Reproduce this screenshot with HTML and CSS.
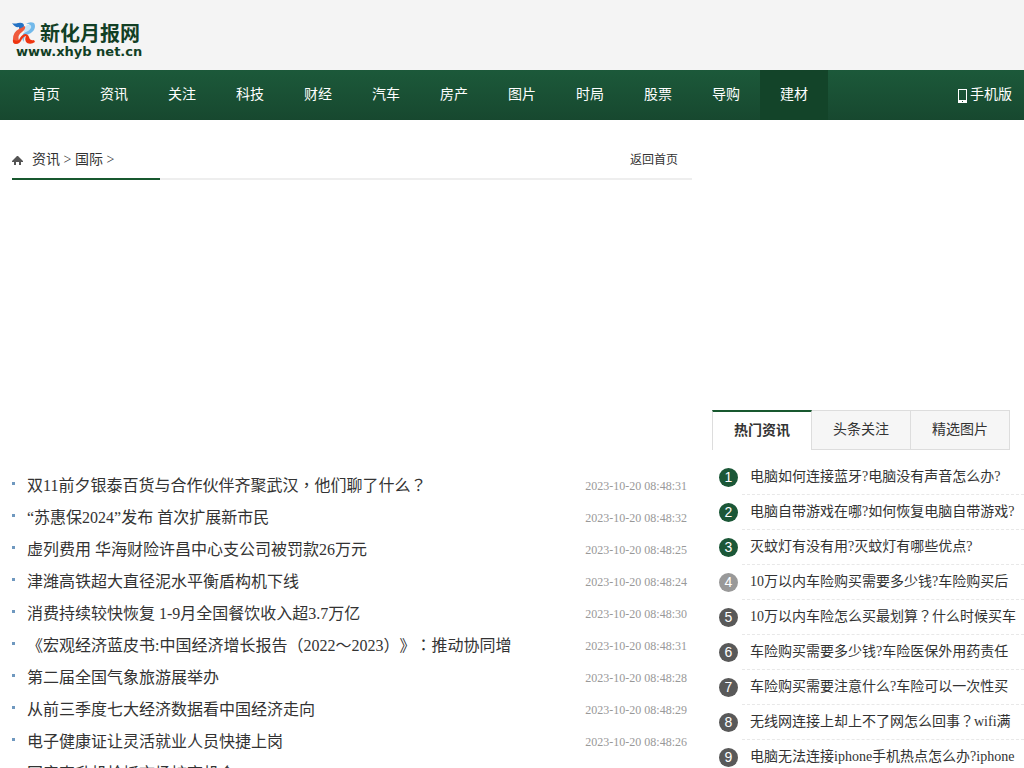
FILE: index.html
```html
<!DOCTYPE html>
<html lang="zh-CN">
<head>
<meta charset="utf-8">
<title>新化月报网</title>
<link rel="stylesheet" href="styles.css">
</head>
<body>
<header class="header">
  <a class="logo" href="#">
    <svg class="logo-mark" viewBox="0 0 24 24" aria-hidden="true">
      <path d="M0 1 Q2 2 6 1 Q12 0 12 4 Q11 8 6 10 Q8 7 7 5 Q3 6 0 1Z" fill="#2472c4"/>
      <path d="M14 2 Q18-1 22 1 Q24 4 22 8 Q19 12 14 13 Q11 16 12 20 Q9 17 11 12 Q13 9 17 8 Q20 5 17 2Z" fill="#72b9ea"/>
      <path d="M15 3 Q20 2 19 6 Q17 9 12 11 Q11 6 15 3Z" fill="#c5e5f8"/>
      <path d="M13 4 Q14 7 10 10 Q5 13 7 19 Q3 21 1 17 Q1 10 7 7 Q11 5 13 4Z" fill="#ef5a3c"/>
      <path d="M1 17 Q0 22 4 22 Q8 22 10 17 Q12 14 14 14 Q12 18 15 21 Q19 23 23 20 L22 18 Q18 19 17 15 Q16 12 13 12 Q9 13 7 18 Q4 20 1 17Z" fill="#ee3510"/>
    </svg>
    <strong class="logo-name">新化月报网</strong>
    <span class="logo-url">www.xhyb net.cn</span>
  </a>
</header>
<nav class="nav">
  <div class="nav-links">
    <a href="#">首页</a><a href="#">资讯</a><a href="#">关注</a><a href="#">科技</a><a href="#">财经</a><a href="#">汽车</a><a href="#">房产</a><a href="#">图片</a><a href="#">时局</a><a href="#">股票</a><a href="#">导购</a><a class="current" href="#">建材</a>
  </div>
  <a class="mobile" href="#">
    <svg class="phone" viewBox="0 0 9 14" aria-hidden="true"><path fill="#fff" fill-rule="evenodd" d="M0 0H9V14H0ZM1 1V11H8V1ZM4 12V13H5V12Z"/></svg>手机版</a>
</nav>
<div class="page">
  <main class="main">
    <div class="crumbs">
      <div class="path">
        <svg class="home" viewBox="0 0 11 9" aria-hidden="true"><path fill="#555" d="M5 0H6L11 5V6H9V9H7V6H4V9H2V6H0V5Z"/></svg>
        <span><a href="#">资讯</a> &gt; <a href="#">国际</a> &gt;</span>
      </div>
      <a class="back" href="#">返回首页</a>
    </div>
    <ul class="news">
      <li><a href="#">双11前夕银泰百货与合作伙伴齐聚武汉<span class="mid" lang="zh-TW">，</span>他们聊了什么<span class="mid" lang="zh-TW">？</span></a><time>2023-10-20 08:48:31</time></li>
      <li><a href="#">“苏惠保2024”发布 首次扩展新市民</a><time>2023-10-20 08:48:32</time></li>
      <li><a href="#">虚列费用 华海财险许昌中心支公司被罚款26万元</a><time>2023-10-20 08:48:25</time></li>
      <li><a href="#">津潍高铁超大直径泥水平衡盾构机下线</a><time>2023-10-20 08:48:24</time></li>
      <li><a href="#">消费持续较快恢复 1-9月全国餐饮收入超3.7万亿</a><time>2023-10-20 08:48:30</time></li>
      <li><a href="#">《宏观经济蓝皮书:中国经济增长报告（2022～2023）》<span class="mid" lang="zh-TW">：</span>推动协同增</a><time>2023-10-20 08:48:31</time></li>
      <li><a href="#">第二届全国气象旅游展举办</a><time>2023-10-20 08:48:28</time></li>
      <li><a href="#">从前三季度七大经济数据看中国经济走向</a><time>2023-10-20 08:48:29</time></li>
      <li><a href="#">电子健康证让灵活就业人员快捷上岗</a><time>2023-10-20 08:48:26</time></li>
      <li><a href="#">国产直升机抢抓市场扩商机会</a></li>
    </ul>
  </main>
  <aside class="side">
    <div class="tabs">
      <button class="tab active" type="button">热门资讯</button>
      <button class="tab" type="button">头条关注</button>
      <button class="tab" type="button">精选图片</button>
    </div>
    <ol class="hot">
      <li><span class="num top">1</span><a href="#">电脑如何连接蓝牙?电脑没有声音怎么办?</a></li>
      <li><span class="num top">2</span><a href="#">电脑自带游戏在哪?如何恢复电脑自带游戏?</a></li>
      <li><span class="num top">3</span><a href="#">灭蚊灯有没有用?灭蚊灯有哪些优点?</a></li>
      <li><span class="num light">4</span><a href="#">10万以内车险购买需要多少钱?车险购买后</a></li>
      <li><span class="num">5</span><a href="#">10万以内车险怎么买最划算<span class="mid" lang="zh-TW">？</span>什么时候买车</a></li>
      <li><span class="num">6</span><a href="#">车险购买需要多少钱?车险医保外用药责任</a></li>
      <li><span class="num">7</span><a href="#">车险购买需要注意什么?车险可以一次性买</a></li>
      <li><span class="num">8</span><a href="#">无线网连接上却上不了网怎么回事<span class="mid" lang="zh-TW">？</span>wifi满</a></li>
      <li><span class="num">9</span><a href="#">电脑无法连接iphone手机热点怎么办?iphone</a></li>
    </ol>
  </aside>
</div>
</body>
</html>
```
FILE: styles.css
```css
* { box-sizing: border-box; }
body {
  margin: 0;
  overflow: hidden;
  background: #fff;
  color: #333;
  font: 14px/20px "Liberation Serif", "Noto Sans CJK SC", serif;
  text-spacing-trim: space-all;
}
a { color: inherit; text-decoration: none; }
ul, ol { margin: 0; padding: 0; list-style: none; }
/* full-width punctuation centred in its cell */
.mid { font-family: "Noto Sans CJK TC", sans-serif; line-height: 1; }
.header { height: 70px; padding: 22px 12px 0; background: #f4f4f4; }
.logo {
  display: inline-grid;
  grid-template-columns: 24px auto;
  column-gap: 4px;
  color: #123f25;
}
.logo-mark { width: 24px; height: 24px; }
.logo-name { font-size: 20px; line-height: 24px; }
.logo-url {
  grid-column: 1 / -1;
  padding-left: 4px;
  font: bold 13px/12px "DejaVu Sans", sans-serif;
}
.nav {
  display: flex;
  justify-content: space-between;
  height: 50px;
  padding: 0 12px;
  background: linear-gradient(#1c593a, #17482f);
  color: #fff;
  line-height: 50px;
}
.nav-links { display: flex; }
.nav-links a { padding: 0 20px; }
.nav-links .current { background: #134429; }
.mobile { display: flex; align-items: center; gap: 3px; }
.phone { width: 9px; height: 14px; margin-top: 2px; }
.page { display: flex; gap: 20px; padding-left: 12px; }
.main { flex: 0 1 680px; padding-top: 20px; }
.crumbs {
  display: flex;
  justify-content: space-between;
  height: 40px;
  border-bottom: 2px solid #eee;
  line-height: 40px;
}
.path {
  display: flex;
  gap: 9px;
  width: 148px;
  height: 40px;
  border-bottom: 2px solid #18582f;
}
.home { width: 11px; height: 9px; margin-top: 16px; }
.back { padding-right: 14px; font-size: 12px; }
.news { padding-top: 290px; }
.news li {
  display: flex;
  justify-content: space-between;
  height: 32px;
  padding: 0 5px 0 0;
  line-height: 32px;
  font-size: 16px;
}
.news li::before { content: ""; width: 3px; height: 3px; margin: 12px 12px 0 0; background: #6f98bf; }
.news a { flex: 1; white-space: nowrap; }
.news time { color: #999; font-size: 12px; }
.side { flex: 1; min-width: 0; padding-top: 290px; }
.tabs { display: flex; width: 298px; }
.tab {
  flex: 1;
  height: 40px;
  padding: 0;
  border: 1px solid #ddd;
  border-left: 0;
  background: #f6f6f6;
  color: #333;
  font: inherit;
}
.tab.active {
  border-top: 2px solid #18582f;
  border-left: 1px solid #ddd;
  border-bottom: 0;
  background: #fff;
  font-weight: bold;
}
.hot { padding-top: 10px; }
.hot li { display: flex; height: 35px; padding-left: 7px; line-height: 34px; white-space: nowrap; }
.hot a { flex: 1; padding-left: 8px; border-bottom: 1px dashed #e8e8e8; }
.num {
  width: 19px;
  height: 19px;
  margin: 8px 4px 0 0;
  border-radius: 50%;
  background: #595959;
  color: #fff;
  font: 14px/19px "Liberation Sans", sans-serif;
  text-align: center;
}
.num.top { background: #1b5737; }
.num.light { background: #999; }
```
